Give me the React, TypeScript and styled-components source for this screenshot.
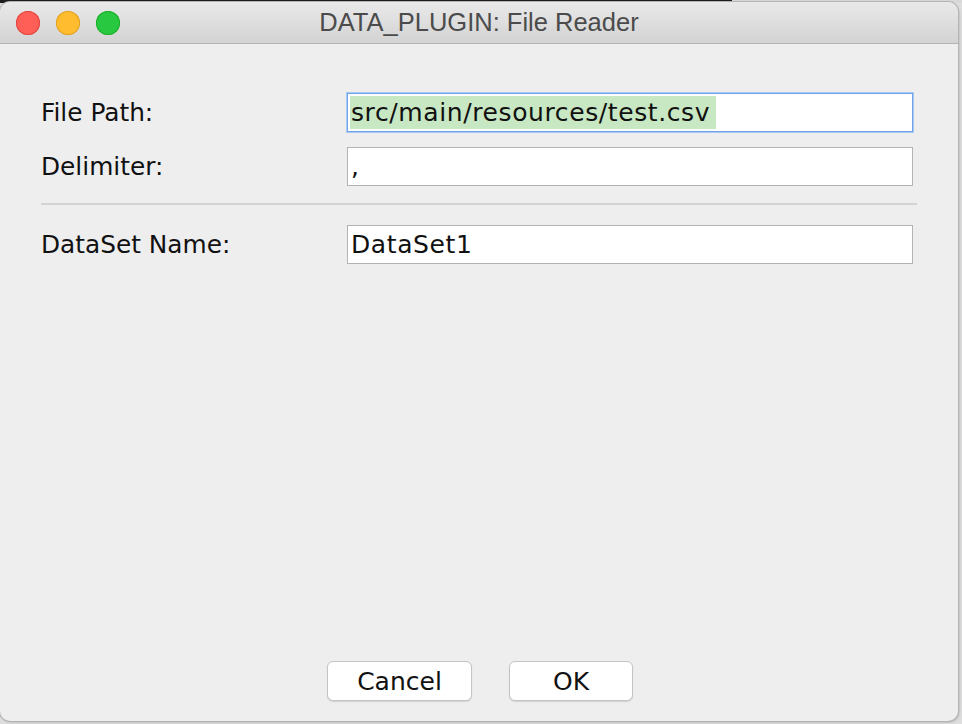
import React from 'react'
import styled, { createGlobalStyle } from 'styled-components'

const GlobalStyle = createGlobalStyle`
  html, body {
    margin: 0;
    padding: 0;
  }
  body {
    width: 962px;
    height: 724px;
    overflow: hidden;
    background:
      linear-gradient(to right, #1d1d1d 0, #1d1d1d 732px, #d9d9d9 732px) top / 100% 3px no-repeat,
      #dedede;
  }
`

const Desktop = styled.div`
  width: 962px;
  height: 724px;
  padding-top: 2px;
  box-sizing: border-box;
`

const Window = styled.div`
  width: 958px;
  height: 719px;
  display: flex;
  flex-direction: column;
  background: #eeeeee;
  border-radius: 10px;
  box-shadow: 0 0 0 1px #b4b4b4, 1px 1px 3px rgba(0, 0, 0, 0.25);
  overflow: hidden;
`

const TitleBar = styled.div`
  height: 41px;
  flex: none;
  display: flex;
  align-items: center;
  position: relative;
  background: linear-gradient(to bottom, #e9e9e9, #d3d3d3);
  border-bottom: 1px solid #b3b3b3;
`

const Lights = styled.div`
  display: flex;
  gap: 16px;
  padding-left: 16px;
`

const Light = styled.span<{ $fill: string; $edge: string }>`
  width: 24px;
  height: 24px;
  border-radius: 50%;
  background: ${p => p.$fill};
  box-shadow: inset 0 0 0 1px ${p => p.$edge};
`

const Title = styled.div`
  position: absolute;
  left: 0;
  right: 0;
  text-align: center;
  font-family: 'Liberation Sans', Arial, sans-serif;
  font-size: 25.5px;
  color: #4b4b4b;
  pointer-events: none;
`

const Body = styled.div`
  flex: 1;
  display: flex;
  flex-direction: column;
  padding: 49px 41px 20px 41px;
  font-family: 'DejaVu Sans', sans-serif;
  font-size: 24.8px;
  color: #111;
`

const FormGrid = styled.div`
  display: grid;
  grid-template-columns: 306px 566px;
  row-gap: 15px;
  align-items: center;
`

const Label = styled.label`
  line-height: 39px;
`

const Field = styled.div<{ $focused?: boolean }>`
  height: 39px;
  box-sizing: border-box;
  background: #fff;
  border: 1px solid ${p => (p.$focused ? '#6fa4ea' : '#b3b3b3')};
  box-shadow: ${p => (p.$focused ? '0 0 0 1px #a9c9f3' : 'none')};
  padding: 0 3px;
  display: flex;
  align-items: center;
  white-space: nowrap;
  overflow: hidden;
  font-size: 25px;
  letter-spacing: 0.6px;
`

const Selected = styled.span`
  background: #c8e7c3;
  line-height: 33px;
  margin-left: -1px;
  padding: 0 6px 0 1px;
`

const Separator = styled.hr`
  grid-column: 1 / -1;
  margin: 2px -4px 5px 0;
  border: none;
  border-top: 2px solid #d3d3d3;
  height: 0;
`

const Spacer = styled.div`
  flex: 1;
`

const ButtonRow = styled.div`
  display: flex;
  justify-content: center;
  gap: 37px;
  padding-left: 2px;
`

const Button = styled.button<{ $w: number }>`
  width: ${p => p.$w}px;
  height: 40px;
  background: #fff;
  border: 1px solid #c4c4c4;
  border-radius: 6px;
  box-shadow: 0 1px 1px rgba(0, 0, 0, 0.12);
  font-family: 'DejaVu Sans', sans-serif;
  font-size: 25px;
  color: #111;
  padding: 0;
`

export default function App() {
  return (
    <>
      <GlobalStyle />
      <Desktop>
        <Window>
          <TitleBar>
            <Lights>
              <Light $fill="#ff5f57" $edge="#e2463f" />
              <Light $fill="#febc2e" $edge="#dea123" />
              <Light $fill="#28c840" $edge="#1dad2b" />
            </Lights>
            <Title>DATA_PLUGIN: File Reader</Title>
          </TitleBar>
          <Body>
            <FormGrid>
              <Label>File Path:</Label>
              <Field $focused>
                <Selected>src/main/resources/test.csv</Selected>
              </Field>
              <Label>Delimiter:</Label>
              <Field>,</Field>
              <Separator />
              <Label>DataSet Name:</Label>
              <Field>DataSet1</Field>
            </FormGrid>
            <Spacer />
            <ButtonRow>
              <Button $w={145}>Cancel</Button>
              <Button $w={124}>OK</Button>
            </ButtonRow>
          </Body>
        </Window>
      </Desktop>
    </>
  )
}
